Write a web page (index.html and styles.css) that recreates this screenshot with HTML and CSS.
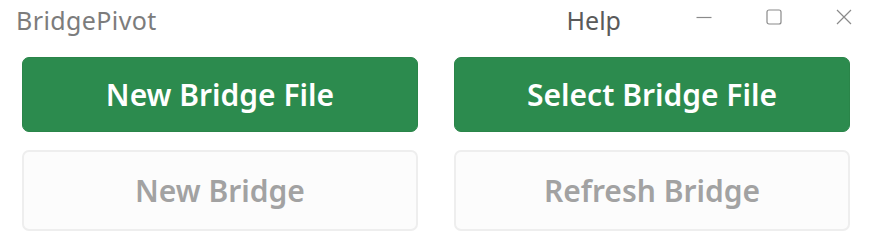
FILE: index.html
```html
<!DOCTYPE html>
<html>
<head>
<meta charset="utf-8">
<link rel="stylesheet" href="styles.css">
</head>
<body>
<div class="titlebar">
  <div class="app-title">BridgePivot</div>
  <div class="menu">Help</div>
  <div class="controls">
    <svg class="ctl" width="16" height="16" viewBox="0 0 16 16"><path d="M0.5 8.5H15.5" stroke="#8a8a8a" stroke-width="1.2" fill="none"/></svg>
    <svg class="ctl" width="16" height="16" viewBox="0 0 16 16"><rect x="1" y="1" width="14" height="14" rx="2" stroke="#8a8a8a" stroke-width="1.2" fill="none"/></svg>
    <svg class="ctl" width="16" height="16" viewBox="0 0 16 16"><path d="M1 1L15 15M15 1L1 15" stroke="#8a8a8a" stroke-width="1.2" fill="none"/></svg>
  </div>
</div>
<div class="grid">
  <button class="btn primary">New Bridge File</button>
  <button class="btn primary">Select Bridge File</button>
  <button class="btn disabled">New Bridge</button>
  <button class="btn disabled">Refresh Bridge</button>
</div>
</body>
</html>
```
FILE: styles.css
```css
html, body {
  margin: 0;
  padding: 0;
  background: #ffffff;
  font-family: "Noto Sans", "Open Sans", sans-serif;
}
.titlebar {
  height: 40px;
  display: flex;
  align-items: center;
}
.app-title {
  margin-left: 16px;
  font-size: 25px;
  letter-spacing: 0.4px;
  color: #7c7c7c;
  margin-top: -1px;
}
.menu {
  margin-left: auto;
  font-size: 25px;
  color: #5a5a5a;
  margin-right: 75px;
  margin-top: -1px;
}
.controls {
  display: flex;
  gap: 54px;
  margin-right: 19px;
  margin-top: -6px;
}
.ctl {
  display: block;
}
.grid {
  display: grid;
  grid-template-columns: 396px 396px;
  grid-template-rows: 75px 81px;
  column-gap: 36px;
  row-gap: 18px;
  padding: 17px 21px 0 22px;
}
.btn {
  font-family: inherit;
  border-radius: 7px;
  font-size: 30px;
  font-weight: 600;
  cursor: pointer;
  padding: 0;
}
.primary {
  background: #2c8b4e;
  color: #ffffff;
  border: 1px solid #2a8549;
}
.disabled {
  background: #fcfcfc;
  color: #a2a2a2;
  border: 2px solid #eeeeee;
}
```
